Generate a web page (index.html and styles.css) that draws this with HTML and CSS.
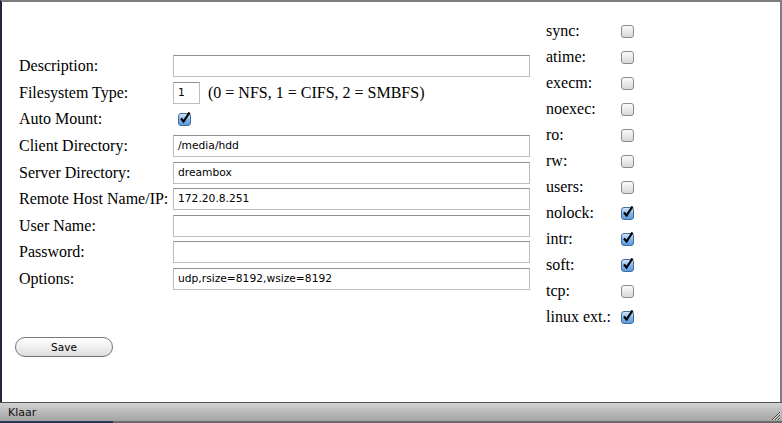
FILE: index.html
```html
<!DOCTYPE html>
<html>
<head>
<meta charset="utf-8">
<link rel="stylesheet" href="styles.css">
</head>
<body>
<div class="window">
  <div class="content">
    <div class="columns">
      <div class="form">
        <div class="label">Description:</div><div class="field"><span class="input wide"></span></div>
        <div class="label">Filesystem Type:</div><div class="field"><span class="input small">1</span><span class="hint">(0 = NFS, 1 = CIFS, 2 = SMBFS)</span></div>
        <div class="label">Auto Mount:</div><div class="field"><span class="cb checked cb-auto"><svg viewBox="0 0 14 14" width="14" height="14"><path d="M3 6.5 L5.6 9.5 L11.5 0.5" fill="none" stroke="#000" stroke-width="2.2" stroke-linejoin="miter"/></svg></span></div>
        <div class="label">Client Directory:</div><div class="field"><span class="input wide">/media/hdd</span></div>
        <div class="label">Server Directory:</div><div class="field"><span class="input wide">dreambox</span></div>
        <div class="label">Remote Host Name/IP:</div><div class="field"><span class="input wide">172.20.8.251</span></div>
        <div class="label">User Name:</div><div class="field"><span class="input wide"></span></div>
        <div class="label">Password:</div><div class="field"><span class="input wide"></span></div>
        <div class="label">Options:</div><div class="field"><span class="input wide">udp,rsize=8192,wsize=8192</span></div>
      </div>
      <div class="opts">
        <div class="olabel">sync:</div><div class="ofield"><span class="cb"></span></div>
        <div class="olabel">atime:</div><div class="ofield"><span class="cb"></span></div>
        <div class="olabel">execm:</div><div class="ofield"><span class="cb"></span></div>
        <div class="olabel">noexec:</div><div class="ofield"><span class="cb"></span></div>
        <div class="olabel">ro:</div><div class="ofield"><span class="cb"></span></div>
        <div class="olabel">rw:</div><div class="ofield"><span class="cb"></span></div>
        <div class="olabel">users:</div><div class="ofield"><span class="cb"></span></div>
        <div class="olabel">nolock:</div><div class="ofield"><span class="cb checked"><svg viewBox="0 0 14 14" width="14" height="14"><path d="M3 6.5 L5.6 9.5 L11.5 0.5" fill="none" stroke="#000" stroke-width="2.2"/></svg></span></div>
        <div class="olabel">intr:</div><div class="ofield"><span class="cb checked"><svg viewBox="0 0 14 14" width="14" height="14"><path d="M3 6.5 L5.6 9.5 L11.5 0.5" fill="none" stroke="#000" stroke-width="2.2"/></svg></span></div>
        <div class="olabel">soft:</div><div class="ofield"><span class="cb checked"><svg viewBox="0 0 14 14" width="14" height="14"><path d="M3 6.5 L5.6 9.5 L11.5 0.5" fill="none" stroke="#000" stroke-width="2.2"/></svg></span></div>
        <div class="olabel">tcp:</div><div class="ofield"><span class="cb"></span></div>
        <div class="olabel">linux ext.:</div><div class="ofield"><span class="cb checked"><svg viewBox="0 0 14 14" width="14" height="14"><path d="M3 6.5 L5.6 9.5 L11.5 0.5" fill="none" stroke="#000" stroke-width="2.2"/></svg></span></div>
      </div>
    </div>
    <div class="actions"><span class="btn">Save</span></div>
  </div>
  <div class="status">
    <span class="status-text">Klaar</span>
    <svg class="grip" viewBox="0 0 12 12" width="12" height="12"><path d="M11 3 L3 11 M11 6 L6 11 M11 9 L9 11" stroke="#4a4a4a" stroke-width="1"/><path d="M12 3 L4 11 M12 6 L7 11 M12 9 L10 11" stroke="#e0e0e0" stroke-width="0.8"/></svg>
  </div>
  <div class="bottom"><span class="bottom-left"></span></div>
</div>
</body>
</html>
```
FILE: styles.css
```css
html, body {
  margin: 0;
  padding: 0;
  background: #fff;
}
.window {
  width: 782px;
  height: 423px;
  display: flex;
  flex-direction: column;
  overflow: hidden;
}
.content {
  height: 384px;
  border-top: 2px solid #7d7d7d;
  border-left: 2px solid #272440;
  border-right: 2px solid #7d7d7d;
  background: #fff;
  padding-top: 16px;
  box-sizing: content-box;
}
.columns {
  display: flex;
  align-items: flex-start;
}
.form {
  margin-left: 17px;
  margin-top: 35px;
  display: grid;
  grid-template-columns: 154px 357px;
  grid-auto-rows: 26.6px;
  font-family: "Liberation Serif", "Times New Roman", serif;
  font-size: 16px;
  color: #000;
}
.label {
  display: flex;
  align-items: center;
  white-space: nowrap;
}
.field {
  display: flex;
  align-items: center;
}
.input {
  box-sizing: border-box;
  height: 22px;
  border: 1px solid #bdbdbd;
  border-top-color: #8e8e8e;
  background: #fff;
  font-family: "DejaVu Sans", Verdana, sans-serif;
  font-size: 10.7px;
  line-height: 20px;
  padding-left: 4px;
  color: #000;
  white-space: nowrap;
}
.wide { width: 357px; }
.small { width: 27px; }
.hint { margin-left: 8px; white-space: nowrap; }
.cb {
  box-sizing: border-box;
  width: 13px;
  height: 13px;
  border: 1px solid #8a8a8a;
  border-radius: 3px;
  background: linear-gradient(#fbfbfb, #d8d8d8);
  position: relative;
  display: inline-block;
}
.cb.checked {
  border-color: #456a9c;
  background: linear-gradient(#cfe4fb, #7db3ec 55%, #5b9ae0);
}
.cb svg {
  position: absolute;
  left: -1px;
  top: -2px;
}
.cb-auto { margin-left: 5px; }
.opts {
  margin-left: 16px;
  display: grid;
  grid-template-columns: 75px 20px;
  grid-auto-rows: 26px;
  font-family: "Liberation Serif", "Times New Roman", serif;
  font-size: 16px;
  color: #000;
}
.olabel {
  display: flex;
  align-items: center;
  white-space: nowrap;
}
.ofield {
  display: flex;
  align-items: center;
}
.actions {
  margin-top: 7px;
  padding-left: 13px;
}
.btn {
  display: inline-flex;
  align-items: center;
  justify-content: center;
  box-sizing: border-box;
  width: 98px;
  height: 20px;
  border: 1px solid #777;
  border-radius: 10px;
  background: linear-gradient(#ffffff, #f0f0f0 50%, #dcdcdc);
  font-family: "DejaVu Sans", Verdana, sans-serif;
  font-size: 10.5px;
  color: #000;
}
.status {
  height: 18px;
  border-top: 1px solid #505050;
  background: linear-gradient(#d2d2d2, #b4b4b4 60%, #a4a4a4);
  display: flex;
  align-items: center;
  justify-content: space-between;
  padding-left: 8px;
  font-family: "DejaVu Sans", Verdana, sans-serif;
  font-size: 11px;
  color: #111;
}
.grip { align-self: flex-end; margin-right: 1px; }
.bottom {
  height: 2px;
  background: #6b6b6b;
  display: flex;
}
.bottom-left {
  width: 113px;
  background: #2c3553;
}
```
